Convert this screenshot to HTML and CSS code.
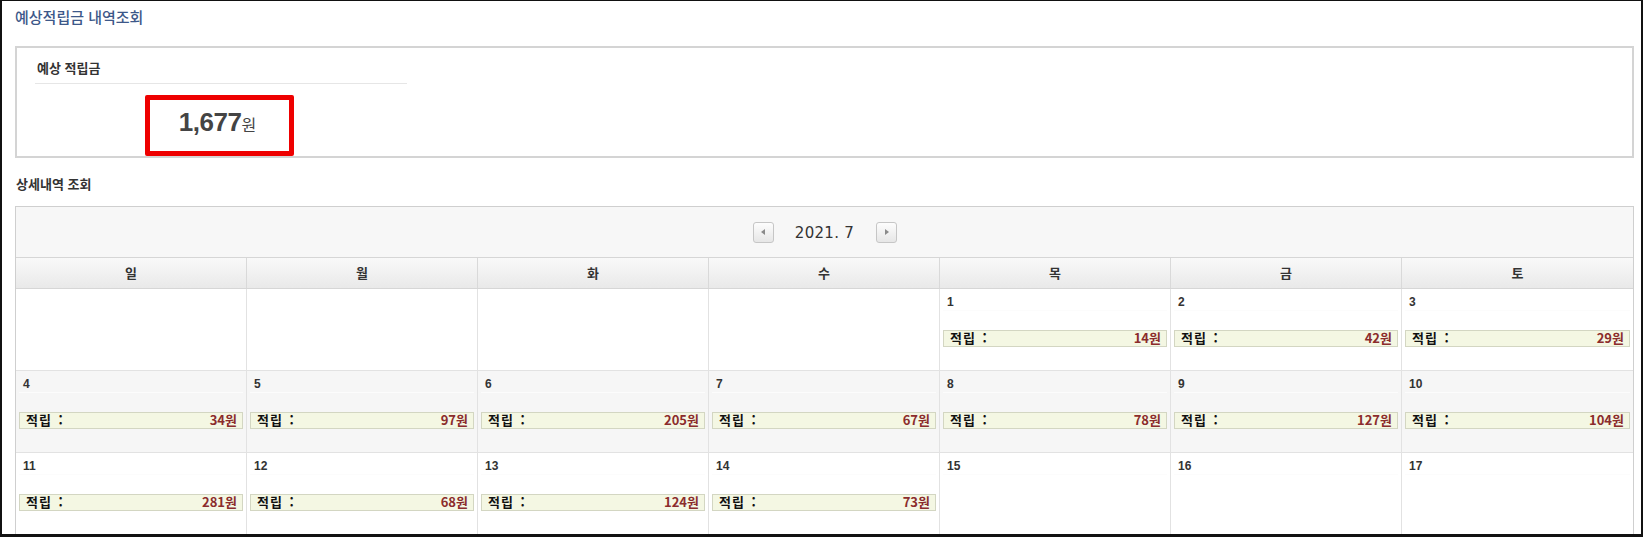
FILE: index.html
```html
<!DOCTYPE html>
<html lang="ko">

<head>
    <meta charset="UTF-8">
    <meta name="viewport" content="width=device-width, initial-scale=1.0">
    <title>예상적립금 내역조회</title>
    <link rel="stylesheet" href="styles.css">
</head>

<body>
    <div class="frame">
        <h1 class="page-title">예상적립금 내역조회</h1>

        <!-- 예상 적립금 요약 -->
        <div class="summary">
            <div class="summary-head">예상 적립금</div>
            <div class="summary-total"><strong>1,677</strong>원</div>
        </div>

        <h2 class="sub-title">상세내역 조회</h2>

        <!-- 달력 -->
        <div class="calendar">
            <div class="cal-nav">
                <button class="nav-btn prev" type="button"></button>
                <span class="cal-month">2021. 7</span>
                <button class="nav-btn next" type="button"></button>
            </div>

            <div class="cal-week cal-head">
                <div>일</div>
                <div>월</div>
                <div>화</div>
                <div>수</div>
                <div>목</div>
                <div>금</div>
                <div>토</div>
            </div>

            <div class="cal-week">
                <div class="cell"></div>
                <div class="cell"></div>
                <div class="cell"></div>
                <div class="cell"></div>
                <div class="cell"><div class="day">1</div><div class="save"><span>적립 :</span><em>14원</em></div></div>
                <div class="cell"><div class="day">2</div><div class="save"><span>적립 :</span><em>42원</em></div></div>
                <div class="cell"><div class="day">3</div><div class="save"><span>적립 :</span><em>29원</em></div></div>
            </div>

            <div class="cal-week gray">
                <div class="cell"><div class="day">4</div><div class="save"><span>적립 :</span><em>34원</em></div></div>
                <div class="cell"><div class="day">5</div><div class="save"><span>적립 :</span><em>97원</em></div></div>
                <div class="cell"><div class="day">6</div><div class="save"><span>적립 :</span><em>205원</em></div></div>
                <div class="cell"><div class="day">7</div><div class="save"><span>적립 :</span><em>67원</em></div></div>
                <div class="cell"><div class="day">8</div><div class="save"><span>적립 :</span><em>78원</em></div></div>
                <div class="cell"><div class="day">9</div><div class="save"><span>적립 :</span><em>127원</em></div></div>
                <div class="cell"><div class="day">10</div><div class="save"><span>적립 :</span><em>104원</em></div></div>
            </div>

            <div class="cal-week">
                <div class="cell"><div class="day">11</div><div class="save"><span>적립 :</span><em>281원</em></div></div>
                <div class="cell"><div class="day">12</div><div class="save"><span>적립 :</span><em>68원</em></div></div>
                <div class="cell"><div class="day">13</div><div class="save"><span>적립 :</span><em>124원</em></div></div>
                <div class="cell"><div class="day">14</div><div class="save"><span>적립 :</span><em>73원</em></div></div>
                <div class="cell"><div class="day">15</div></div>
                <div class="cell"><div class="day">16</div></div>
                <div class="cell"><div class="day">17</div></div>
            </div>
        </div>
    </div>
</body>

</html>
```

FILE: styles.css
```css
* {
    box-sizing: border-box;
}

body {
    margin: 0;
    font-family: "Noto Sans CJK KR", "Liberation Sans", sans-serif;
    color: #333;
    background-color: #fff;
}

.frame {
    height: 537px;
    border-style: solid;
    border-color: #111;
    border-width: 1px 2px 3px 2px;
    padding: 0 7px 0 13px;
    overflow: hidden;
}

.page-title {
    margin: 0;
    padding-top: 6px;
    height: 45px;
    font-size: 15px;
    font-weight: 500;
    line-height: 20px;
    color: #3d5889;
}

/* 요약 박스 */
.summary {
    height: 112px;
    border: 2px solid #d4d4d4;
    padding: 11px 18px 0;
}

.summary-head {
    width: 372px;
    height: 25px;
    padding-left: 2px;
    border-bottom: 1px solid #e6e6e6;
    font-size: 13px;
    font-weight: bold;
    line-height: 18px;
    color: #333;
}

.summary-total {
    width: 149px;
    height: 61px;
    margin: 11px 0 0 110px;
    border: 5px solid #ee0000;
    border-radius: 2px;
    text-align: center;
    font-size: 16px;
    line-height: 44px;
    color: #444;
    padding-right: 4px;
}

.summary-total strong {
    font-family: "Liberation Sans", sans-serif;
    font-size: 26px;
    letter-spacing: -0.5px;
    color: #444;
}

.sub-title {
    margin: 0;
    padding-top: 17px;
    height: 48px;
    padding-left: 1px;
    font-size: 13px;
    font-weight: bold;
    line-height: 18px;
    color: #333;
}

/* 달력 */
.calendar {
    border: 1px solid #cfcfcf;
    border-bottom: none;
}

.cal-nav {
    height: 50px;
    background-color: #f7f7f7;
    display: flex;
    justify-content: center;
    align-items: center;
    padding-top: 1px;
}

.cal-month {
    width: 102px;
    text-align: center;
    font-family: "DejaVu Sans", sans-serif;
    font-size: 15px;
    letter-spacing: 0.3px;
    color: #333;
}

.nav-btn {
    width: 21px;
    height: 21px;
    padding: 0;
    border: 1px solid #c6c6c6;
    border-radius: 3px;
    background: linear-gradient(#fdfdfd, #e6e6e6);
    position: relative;
    cursor: pointer;
}

.nav-btn::after {
    content: "";
    position: absolute;
    top: 6px;
    width: 0;
    height: 0;
    border-top: 3px solid transparent;
    border-bottom: 3px solid transparent;
}

.nav-btn.prev::after {
    left: 7px;
    border-right: 4px solid #8a8a8a;
}

.nav-btn.next::after {
    left: 8px;
    border-left: 4px solid #8a8a8a;
}

.cal-week {
    display: grid;
    grid-template-columns: repeat(7, 1fr);
}

.cal-head {
    height: 32px;
    border-top: 1px solid #d6d6d6;
    border-bottom: 1px solid #d6d6d6;
    background: linear-gradient(#f9f9f9, #e9e9e9);
}

.cal-head div {
    text-align: center;
    font-size: 13px;
    font-weight: bold;
    line-height: 30px;
    color: #333;
    border-right: 1px solid #d9d9d9;
}

.cal-head div:last-child,
.cell:last-child {
    border-right: none;
}

.cell {
    height: 82px;
    padding: 6px 3px 0;
    border-right: 1px solid #e2e2e2;
    border-bottom: 1px solid #e2e2e2;
}

.cal-week.gray {
    background-color: #f6f6f6;
}

.day {
    height: 16px;
    padding-left: 4px;
    font-family: "Liberation Sans", sans-serif;
    font-size: 12px;
    font-weight: bold;
    line-height: 15px;
    color: #333;
    border-bottom: 1px solid #fcfcfc;
}

.save {
    display: flex;
    justify-content: space-between;
    height: 17px;
    margin-top: 19px;
    padding: 0 5px 0 6px;
    border: 1px solid #d3d6c2;
    background-color: #f4f7e3;
    line-height: 14px;
}

.save span {
    font-size: 13px;
    font-weight: bold;
    color: #111;
    letter-spacing: 1px;
    word-spacing: 2px;
}

.save em {
    font-style: normal;
    font-size: 13px;
    font-weight: bold;
    color: #8b2c2c;
}
```
